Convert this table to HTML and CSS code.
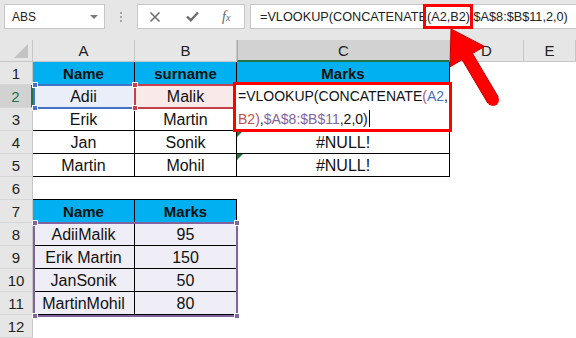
FILE: index.html
```html
<!DOCTYPE html>
<html>
<head>
<meta charset="utf-8">
<link rel="stylesheet" href="styles.css">
</head>
<body>
<div class="toolbar">
  <div class="namebox"><span>ABS</span><span class="caret"></span></div>
  <div class="dots"><i></i><i></i><i></i></div>
  <div class="fxbox">
    <svg class="ic-x" width="12" height="12" viewBox="0 0 12 12"><path d="M1.5 1.5 L10.5 10.5 M10.5 1.5 L1.5 10.5" stroke="#6f6f6f" stroke-width="1.6" fill="none"/></svg>
    <svg class="ic-ok" width="13" height="11" viewBox="0 0 13 11"><path d="M1 5.5 L4.8 9.2 L12 1.5" stroke="#6f6f6f" stroke-width="2.4" fill="none"/></svg>
    <span class="fx">f<span class="fxs">x</span></span>
  </div>
  <div class="formula">=VLOOKUP(CONCATENATE<span class="hl">(A2,B2)</span>,$A$8:$B$11,2,0)</div>
</div>

<div class="sheet">
  <div class="corner"></div><div class="ch">A</div><div class="ch">B</div><div class="ch sel">C</div><div class="ch">D</div><div class="ch">E</div>

  <div class="rh">1</div><div class="c hd">Name</div><div class="c hd">surname</div><div class="c hd">Marks</div><div class="c"></div><div class="c"></div>
  <div class="rh sel">2</div><div class="c tb a2">Adii</div><div class="c tb b2">Malik</div><div class="c tb"></div><div class="c"></div><div class="c"></div>
  <div class="rh">3</div><div class="c tb">Erik</div><div class="c tb">Martin</div><div class="c tb"></div><div class="c"></div><div class="c"></div>
  <div class="rh">4</div><div class="c tb">Jan</div><div class="c tb">Sonik</div><div class="c tb err">#NULL!</div><div class="c"></div><div class="c"></div>
  <div class="rh">5</div><div class="c tb">Martin</div><div class="c tb">Mohil</div><div class="c tb err">#NULL!</div><div class="c"></div><div class="c"></div>
  <div class="rh">6</div><div class="c bb"></div><div class="c bb"></div><div class="c"></div><div class="c"></div><div class="c"></div>
  <div class="rh">7</div><div class="c hd">Name</div><div class="c hd">Marks</div><div class="c"></div><div class="c"></div><div class="c"></div>
  <div class="rh">8</div><div class="c tb lav">AdiiMalik</div><div class="c tb lav">95</div><div class="c"></div><div class="c"></div><div class="c"></div>
  <div class="rh">9</div><div class="c tb lav">Erik Martin</div><div class="c tb lav">150</div><div class="c"></div><div class="c"></div><div class="c"></div>
  <div class="rh">10</div><div class="c tb lav">JanSonik</div><div class="c tb lav">50</div><div class="c"></div><div class="c"></div><div class="c"></div>
  <div class="rh">11</div><div class="c tb lav">MartinMohil</div><div class="c tb lav">80</div><div class="c"></div><div class="c"></div><div class="c"></div>
  <div class="rh">12</div><div class="c"></div><div class="c"></div><div class="c"></div><div class="c"></div><div class="c"></div>

  <div class="sel-a2"><i class="h bl-tl"></i><i class="h bl-bl"></i></div>
  <div class="sel-b2"><i class="h rd-tl"></i><i class="h rd-bl"></i></div>
  <div class="editor">=VLOOKUP(CONCATENATE<span class="pk">(</span><span class="bu">A2</span>,<br><span class="rd">B2</span><span class="pk">)</span>,<span class="pu">$A$8:$B$11</span>,2,0)<span class="cursor"></span></div>
  <div class="sel-p"><i class="h p-tl"></i><i class="h p-tr"></i><i class="h p-bl"></i><i class="h p-br"></i></div>
</div>

<svg class="arrow" width="576" height="338" viewBox="0 0 576 338">
  <polygon points="451,29 484.5,46.4 472.5,53.5 498.2,96.9 487.8,103.1 462.1,59.7 450.1,66.8" fill="#ff0000" stroke="#c40000" stroke-width="1" stroke-linejoin="round"/>
  <circle cx="493" cy="100" r="6" fill="#ff0000"/>
</svg>
</body>
</html>
```

FILE: styles.css
```css
* { box-sizing: border-box; }
body {
  margin: 0;
  width: 576px;
  height: 338px;
  overflow: hidden;
  position: relative;
  background: #fff;
  font-family: "Liberation Sans", Arial, sans-serif;
  color: #111;
}
.toolbar {
  height: 40px;
  background: #e6e6e6;
  display: flex;
  align-items: flex-start;
  padding: 4px 0 0 4px;
}
.namebox {
  width: 101px;
  height: 25px;
  background: #fff;
  border: 1px solid #c6c6c6;
  display: flex;
  align-items: center;
  justify-content: space-between;
  padding: 0 6px 0 7px;
  font-size: 12px;
  color: #222;
}
.caret {
  width: 0;
  height: 0;
  border-left: 4px solid transparent;
  border-right: 4px solid transparent;
  border-top: 4px solid #7a7a7a;
}
.dots {
  width: 32px;
  height: 25px;
  display: flex;
  flex-direction: column;
  align-items: center;
  justify-content: center;
  gap: 2px;
}
.dots i { display: block; width: 2px; height: 2px; background: #a6a6a6; }
.fxbox {
  width: 108px;
  height: 25px;
  background: #fff;
  border: 1px solid #c6c6c6;
  display: flex;
  align-items: center;
  padding-left: 11px;
}
.ic-ok { margin-left: 25px; }
.fx {
  margin-left: 23px;
  font-family: "Liberation Serif", serif;
  font-style: italic;
  font-size: 14px;
  color: #666;
}
.fxs { font-size: 10px; }
.formula {
  flex: 1;
  margin-left: 5px;
  height: 25px;
  background: #fff;
  border: 1px solid #c6c6c6;
  border-right: none;
  display: flex;
  align-items: center;
  padding-left: 9px;
  font-size: 12.7px;
  white-space: nowrap;
  color: #222;
}
.hl { position: relative; }
.hl::after {
  content: "";
  position: absolute;
  left: -4px;
  right: -3px;
  top: -6px;
  bottom: -5px;
  border: 3px solid #ff0000;
}

.sheet {
  display: grid;
  grid-template-columns: 33px 102px 102px 213px 74px 52px;
  grid-template-rows: 22px repeat(12, 23px);
  position: relative;
}
.corner {
  background: #e6e6e6;
  border-right: 1px solid #c6c6c6;
  border-bottom: 1px solid #c6c6c6;
  position: relative;
}
.corner::after {
  content: "";
  position: absolute;
  right: 4px;
  bottom: 3px;
  width: 0;
  height: 0;
  border-style: solid;
  border-width: 0 0 14px 14px;
  border-color: transparent transparent #c3c3c3 transparent;
}
.ch {
  background: #e6e6e6;
  border-right: 1px solid #c6c6c6;
  border-bottom: 1px solid #c6c6c6;
  display: flex;
  align-items: center;
  justify-content: center;
  font-size: 15px;
  color: #222;
}
.ch.sel {
  background: #d2d2d2;
  border-bottom: 2px solid #217346;
  border-left: 1px solid #ababab;
}
.rh {
  background: #e6e6e6;
  border-right: 1px solid #c6c6c6;
  border-bottom: 1px solid #d6d6d6;
  display: flex;
  align-items: center;
  justify-content: center;
  font-size: 15px;
  color: #222;
}
.rh.sel {
  background: #d2d2d2;
  border-right: 2px solid #217346;
  color: #217346;
}
.c {
  display: flex;
  align-items: center;
  justify-content: center;
  font-size: 16px;
  padding-top: 1px;
  white-space: nowrap;
  position: relative;
}
.hd {
  background: #00b0f0;
  font-weight: bold;
  font-size: 15px;
  border-right: 1px solid #000;
  border-bottom: 1px solid #000;
}
.tb { border-right: 1px solid #000; border-bottom: 1px solid #000; }
.bb { border-bottom: 1px solid #000; }
.a2 { background: #e9eef8; }
.b2 { background: #f9e9e9; }
.lav { background: #efedf5; }
.err::before {
  content: "";
  position: absolute;
  left: 0;
  top: 0;
  width: 0;
  height: 0;
  border-top: 6px solid #1f7a36;
  border-right: 6px solid transparent;
}

.sel-a2, .sel-b2, .editor, .sel-p { position: absolute; }
.sel-a2 {
  grid-area: 3 / 2 / 4 / 3;
  top: -1px; bottom: -1px; left: 0; right: -1px;
  border: 2px solid #4472c4;
}
.sel-b2 {
  grid-area: 3 / 3 / 4 / 4;
  top: -1px; bottom: -1px; left: -1px; right: -2px;
  border: 2px solid #c5404b;
}
.sel-p {
  grid-area: 9 / 2 / 13 / 4;
  top: -1px; bottom: -2px; left: 0; right: -1px;
  border: 2px solid #8064a2;
}
.h { position: absolute; display: block; width: 6px; height: 6px; border: 1px solid #fff; }
.bl-tl { left: -3px; top: -4px; background: #4472c4; }
.bl-bl { left: -3px; bottom: -4px; background: #4472c4; }
.rd-tl { left: -4px; top: -4px; background: #c5404b; }
.rd-bl { left: -4px; bottom: -4px; background: #c5404b; }
.p-tl { left: -3px; top: -4px; background: #8064a2; }
.p-tr { right: -4px; top: -4px; background: #8064a2; }
.p-bl { left: -3px; bottom: -4px; background: #8064a2; }
.p-br { right: -4px; bottom: -4px; background: #8064a2; }
.editor {
  grid-area: 3 / 4 / 5 / 5;
  top: -3px; left: -4px; right: -2px; bottom: -1px;
  border: 3px solid #ff0000;
  background: #fff;
  font-size: 14px;
  line-height: 23px;
  padding-left: 2px;
  white-space: nowrap;
  color: #111;
}
.pk { color: #b4507a; }
.bu { color: #4472c4; }
.rd { color: #c0504d; }
.pu { color: #8064a2; }
.cursor {
  display: inline-block;
  width: 1px;
  height: 17px;
  background: #000;
  margin-left: 1px;
  vertical-align: -3px;
}
.arrow {
  position: absolute;
  left: 0;
  top: 0;
  pointer-events: none;
}
```
